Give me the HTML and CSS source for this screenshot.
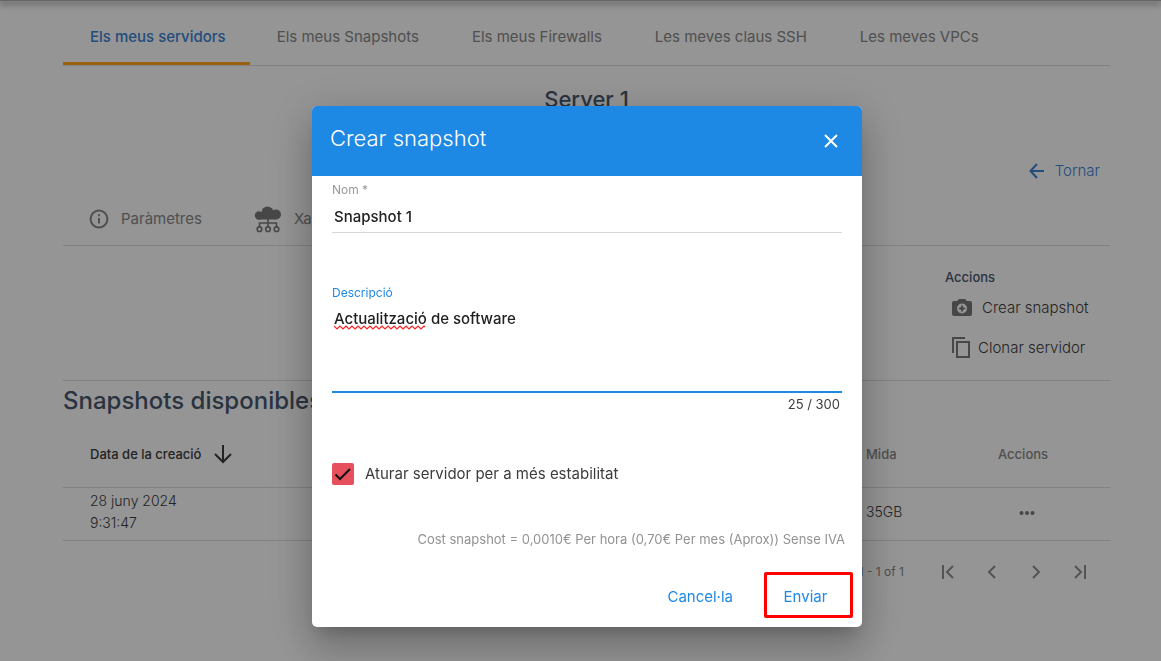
FILE: index.html
```html
<!DOCTYPE html>
<html lang="ca">
<head>
<meta charset="utf-8">
<meta name="viewport" content="width=device-width, initial-scale=1">
<title>Crear snapshot</title>
<link rel="stylesheet" href="styles.css">
</head>
<body>
<div class="topbar"></div>
<main class="page">
  <nav class="tabs">
    <a class="tab tab-active" href="#">Els meus servidors</a>
    <a class="tab" href="#">Els meus Snapshots</a>
    <a class="tab" href="#">Els meus Firewalls</a>
    <a class="tab" href="#">Les meves claus SSH</a>
    <a class="tab" href="#">Les meves VPCs</a>
  </nav>
  <h1 class="server-name">Server 1</h1>
  <div class="back-row">
    <a class="back" href="#"><svg width="16" height="16" viewBox="0 0 16 16" fill="none" stroke="currentColor" stroke-width="2"><path d="M15 8H2M8 1L1.500 8L8 15"/></svg>Tornar</a>
  </div>
  <nav class="subtabs">
    <a class="subtab" href="#"><svg width="20" height="20" viewBox="0 0 20 20" fill="none" stroke="currentColor" stroke-width="2"><circle cx="10" cy="10" r="8.400"/><path d="M10 9v5.500M10 5.200v2"/></svg>Paràmetres</a>
    <a class="subtab subtab-cloud" href="#"><svg width="28" height="28" viewBox="0 0 28 28" fill="none" stroke="#777" stroke-width="1.600"><g fill="#777" stroke="none"><circle cx="5" cy="10.500" r="4.200"/><circle cx="13.500" cy="7.500" r="6"/><circle cx="22" cy="9.500" r="5"/><path d="M5 10h17v4.500H5z"/></g><path d="M14 14v8M5.500 22v-4h17v4"/><g><circle cx="5.500" cy="24.200" r="2.300"/><circle cx="14" cy="24.200" r="2.300"/><circle cx="22.500" cy="24.200" r="2.300"/></g></svg>Xarxa</a>
  </nav>
  <section class="server-actions">
    <div class="action-list">
      <h3 class="action-title">Accions</h3>
      <button class="action"><svg width="20" height="18" viewBox="0 0 20 18"><path fill="#777" fill-rule="evenodd" d="M7 0h6l2 2h3a2 2 0 0 1 2 2v11a2 2 0 0 1-2 2H2a2 2 0 0 1-2-2V4a2 2 0 0 1 2-2h3zM10 4.500a5 5 0 1 0 0 10a5 5 0 0 0 0-10z"/><path fill="#777" d="M10 5.500l1.200 2.800L14 9.500l-2.800 1.200L10 13.500l-1.200-2.800L6 9.500l2.800-1.200z"/></svg>Crear snapshot</button>
      <button class="action action-clone"><svg width="18" height="22" viewBox="0 0 18 22" fill="none" stroke="#777" stroke-width="2"><path d="M1 16V1h12M5 5h12v15H5z"/></svg>Clonar servidor</button>
    </div>
  </section>
  <h2 class="section-title">Snapshots disponibles</h2>
  <table class="snapshots">
    <thead>
      <tr><th class="col-date"><span class="sort">Data de la creació<svg width="20" height="20" viewBox="0 0 20 20" fill="none" stroke="currentColor" stroke-width="2"><path d="M10 1v17M2 10l8 8l8-8"/></svg></span></th><th class="col-size">Mida</th><th class="col-actions">Accions</th></tr>
    </thead>
    <tbody>
      <tr><td class="col-date">28 juny 2024<br>9:31:47</td><td class="col-size">35GB</td><td class="col-actions"><button class="more" aria-label="Més accions"><svg width="16" height="6" viewBox="0 0 16 6" fill="#777"><circle cx="2.500" cy="3" r="2"/><circle cx="8" cy="3" r="2"/><circle cx="13.500" cy="3" r="2"/></svg></button></td></tr>
    </tbody>
  </table>
  <div class="pager">
    <span class="pager-range">1 - 1 of 1</span>
    <button class="pager-btn" aria-label="Primera"><svg width="14" height="14" viewBox="0 0 14 14"><path d="M2 0v14M12 1L6 7l6 6"/></svg></button>
    <button class="pager-btn" aria-label="Anterior"><svg width="14" height="14" viewBox="0 0 14 14"><path d="M10 1L4 7l6 6"/></svg></button>
    <button class="pager-btn" aria-label="Següent"><svg width="14" height="14" viewBox="0 0 14 14"><path d="M4 1l6 6l-6 6"/></svg></button>
    <button class="pager-btn" aria-label="Última"><svg width="14" height="14" viewBox="0 0 14 14"><path d="M2 1l6 6l-6 6M12 0v14"/></svg></button>
  </div>
</main>
<div class="overlay">
  <form class="dialog" role="dialog" aria-labelledby="dialog-title">
    <header class="dialog-head">
      <h2 class="dialog-title" id="dialog-title">Crear snapshot</h2>
      <button class="close" type="button" aria-label="Tancar"><svg width="14" height="14" viewBox="0 0 14 14" fill="none" stroke="#fff" stroke-width="2"><path d="M1 1l12 12M13 1L1 13"/></svg></button>
    </header>
    <div class="dialog-body">
      <div class="field">
        <label class="label" for="name">Nom *</label>
        <input class="control" id="name" type="text" value="Snapshot 1">
      </div>
      <div class="field field-focused">
        <label class="label" for="description">Descripció</label>
        <div class="area">
          <textarea class="control control-area" id="description" spellcheck="false">Actualització de software</textarea>
          <svg class="spelling" width="94" height="5" viewBox="0 0 94 5" fill="none" stroke="#f22" stroke-width="1.200"><path d="M0 1l3 3l3-3l3 3l3-3l3 3l3-3l3 3l3-3l3 3l3-3l3 3l3-3l3 3l3-3l3 3l3-3l3 3l3-3l3 3l3-3l3 3l3-3l3 3l3-3l3 3l3-3l3 3l3-3l3 3l3-3l1 1"/></svg>
        </div>
        <span class="counter">25 / 300</span>
      </div>
      <label class="check"><input class="check-box" type="checkbox" checked>Aturar servidor per a més estabilitat</label>
      <p class="cost">Cost snapshot = 0,0010€ Per hora (0,70€ Per mes (Aprox)) Sense IVA</p>
    </div>
    <footer class="dialog-foot">
      <button class="text-btn" type="button">Cancel·la</button>
      <button class="text-btn text-btn-marked" type="submit">Enviar</button>
    </footer>
  </form>
</div>
</body>
</html>
```
FILE: styles.css
```css
* { box-sizing: border-box; }
body { margin: 0; background: #f8f8f8; color: #3c3c3c; font: 14px/22px Inter, "Liberation Sans", sans-serif; font-feature-settings: "locl" 0; overflow: hidden; }
h1, h2, h3, p { margin: 0; }
a { color: inherit; text-decoration: none; }
button { padding: 0; border: 0; background: none; color: inherit; font: inherit; cursor: pointer; }
svg { display: block; flex: none; }

.topbar { height: 1px; background: #a8a8a8; box-shadow: 0 2px 6px 1px #888; }
.page { padding: 0 51px 0 63px; }

.tabs { display: flex; height: 65px; border-bottom: 1px solid #d8d8d8; color: #858585; font-size: 15px; }
.tab { padding: 25px 26px 0 27px; }
.tab-active { padding-right: 24px; border-bottom: 3px solid #ffa31a; color: #3a80d0; font-weight: 500; }

.server-name { padding-top: 19px; color: #46566b; font-size: 22px; line-height: 28px; font-weight: 500; text-align: center; }
.back-row { display: flex; justify-content: flex-end; padding: 47px 10px 0 0; }
.back { display: flex; align-items: center; gap: 10px; color: #3a80d0; font-size: 15px; font-weight: 300; }

.subtabs { display: flex; height: 64px; padding-left: 26px; border-bottom: 1px solid #d8d8d8; color: #858585; font-size: 15px; }
.subtab { display: flex; align-items: center; gap: 12px; padding-top: 10px; }
.subtab-cloud { margin-left: 52px; }

.server-actions { display: flex; justify-content: flex-end; height: 135px; border-bottom: 1px solid #d8d8d8; }
.action-list { display: flex; flex-direction: column; align-items: flex-start; width: 165px; padding-top: 20px; }
.action-title { color: #46566b; font-size: 13px; font-weight: 500; line-height: 22px; }
.action { display: flex; align-items: center; gap: 10px; height: 40px; padding-left: 7px; font-size: 15px; font-weight: 300; }
.action-clone { gap: 8px; }

.section-title { padding-top: 4px; color: #46566b; font-size: 24px; line-height: 32px; font-weight: 500; }
.snapshots { width: 100%; border-collapse: collapse; text-align: left; }
.snapshots th { height: 70px; padding: 4px 0 0; border-bottom: 1px solid #d8d8d8; color: #858585; font-size: 13px; font-weight: 500; }
.snapshots td { height: 53px; padding: 0 0 3px; border-bottom: 1px solid #d8d8d8; font-weight: 300; }
.snapshots .col-date { padding-left: 27px; }
.snapshots .col-size { width: 132px; }
.snapshots .col-actions { width: 112px; }
.sort { display: flex; align-items: center; gap: 12px; color: #3c3c3c; }
.more { display: block; padding: 2px 21px 0; }

.pager { display: flex; align-items: center; justify-content: flex-end; padding: 9px 8px 0 0; color: #858585; }
.pager-range { margin-right: 22px; font-size: 12px; }
.pager-btn { display: flex; align-items: center; justify-content: center; width: 44px; height: 44px; }
.pager-btn path { fill: none; stroke: #8c8c8c; stroke-width: 2; }

.overlay { position: fixed; inset: 0; display: flex; justify-content: center; align-items: center; padding: 72px 0 0 13px; background: rgba(0, 0, 0, .4); }
.dialog { width: 550px; border-radius: 5px; background: #fff; color: #3c3c3c; overflow: hidden; box-shadow: 0 11px 15px -7px rgba(0, 0, 0, .2), 0 9px 46px 8px rgba(0, 0, 0, .12), 0 24px 38px 3px rgba(0, 0, 0, .14); }
.dialog-head { display: flex; justify-content: space-between; align-items: center; height: 70px; padding: 0 24px 0 18px; background: #1e88e5; color: #fff; }
.dialog-title { padding-bottom: 6px; font-size: 22px; line-height: 28px; font-weight: 300; }
.dialog-body { padding: 4px 17px 0 20px; }
.field { display: flex; flex-direction: column; margin: 0 3px 50px 0; }
.label { color: #999; font-size: 12px; line-height: 20px; }
.control { display: block; width: 100%; height: 33px; padding: 0 2px; border: 0; border-bottom: 1px solid #d8d8d8; border-radius: 0; outline: 0; background: none; color: #212121; font: 500 15px/22px Inter, "Liberation Sans", sans-serif; }
.field-focused { margin-bottom: 48px; }
.field-focused .label { color: #1e88e5; }
.area { position: relative; }
.control-area { height: 90px; padding-top: 5px; border-bottom: 2px solid #1e88e5; resize: none; }
.spelling { position: absolute; left: 2px; top: 22px; }
.counter { align-self: flex-end; padding-right: 2px; font-size: 13px; line-height: 22px; }
.check { display: flex; align-items: center; gap: 11px; font-size: 15px; line-height: 22px; }
.check-box { appearance: none; width: 22px; height: 22px; margin: 0; border-radius: 2px; background: #e5505c url("data:image/svg+xml,%3Csvg xmlns='http://www.w3.org/2000/svg' viewBox='0 0 22 22'%3E%3Cpath d='M3.500 11.500L8 16L18 6' fill='none' stroke='%23111' stroke-width='2'/%3E%3C/svg%3E"); }
.cost { padding-top: 43px; color: #929292; font-size: 13px; line-height: 22px; text-align: right; }
.dialog-foot { display: flex; justify-content: flex-end; gap: 31px; padding: 22px 9px 9px; }
.text-btn { height: 46px; padding-top: 3px; color: #1e88e5; font-size: 15px; }
.text-btn-marked { width: 89px; padding-right: 6px; border: 3px solid #f00; border-radius: 2px; }
```
